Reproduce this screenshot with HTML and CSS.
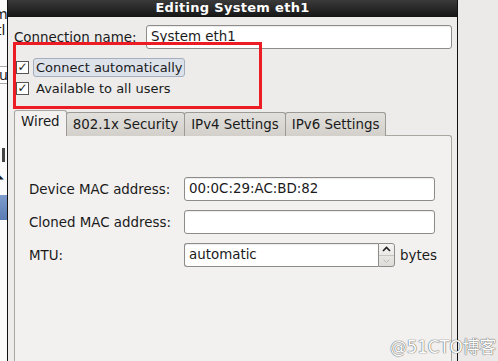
FILE: index.html
```html
<!DOCTYPE html>
<html lang="en">
<head>
    <meta charset="UTF-8">
    <title>Editing System eth1</title>
    <link rel="stylesheet" href="styles.css">
</head>
<body>
    <div class="desk">
        <div class="behind">
            <div class="frag frag-1">m</div>
            <div class="frag frag-2">tl</div>
            <div class="frag frag-box">lu</div>
            <div class="frag frag-head"></div>
            <div class="frag frag-sort">&#9698;</div>
            <div class="frag frag-sel"></div>
        </div>

        <div class="dialog">
            <div class="titlebar">Editing System eth1</div>

            <div class="dialog-body">
                <div class="name-row">
                    <label class="name-label">Connection name:</label>
                    <div class="entry name-entry">System eth1</div>
                </div>

                <div class="checks">
                    <div class="check-row">
                        <span class="checkbox">&#10003;</span>
                        <span class="check-label focused">Connect automatically</span>
                    </div>
                    <div class="check-row">
                        <span class="checkbox">&#10003;</span>
                        <span class="check-label">Available to all users</span>
                    </div>
                    <div class="annotation"></div>
                </div>

                <div class="tabs">
                    <div class="tab active">Wired</div>
                    <div class="tab">802.1x Security</div>
                    <div class="tab">IPv4 Settings</div>
                    <div class="tab">IPv6 Settings</div>
                </div>

                <div class="tab-pane">
                    <div class="form-grid">
                        <label>Device MAC address:</label>
                        <div class="entry">00:0C:29:AC:BD:82</div>

                        <label>Cloned MAC address:</label>
                        <div class="entry"></div>

                        <label>MTU:</label>
                        <div class="mtu">
                            <div class="spin">
                                <div class="entry spin-entry">automatic</div>
                                <div class="spin-buttons">
                                    <span class="spin-up">
                                        <svg width="9" height="6" viewBox="0 0 9 6"><path d="M1 5 L4.5 1.5 L8 5" fill="none" stroke="#222" stroke-width="1.6"/></svg>
                                    </span>
                                    <span class="spin-down">
                                        <svg width="9" height="6" viewBox="0 0 9 6"><path d="M1.5 1.5 L4.5 4.5 L7.5 1.5" fill="none" stroke="#bbb" stroke-width="1"/></svg>
                                    </span>
                                </div>
                            </div>
                            <span class="unit">bytes</span>
                        </div>
                    </div>
                </div>
            </div>
        </div>

        <div class="outside"></div>
    </div>

    <div class="watermark">@51CTO博客</div>
</body>
</html>
```

FILE: styles.css
```css
:root {
    --window-bg: #edecea;
    --pane-bg: #f2f1f0;
    --border: #9d9a95;
    --text: #1a1a1a;
    --mark: #ed1c24;
}

body {
    margin: 0;
    padding: 0;
    background-color: var(--window-bg);
    font-family: 'DejaVu Sans', sans-serif;
    font-size: 13.4px;
    color: var(--text);
    overflow: hidden;
}

.desk {
    display: flex;
    height: 361px;
}

/* window peeking out on the left */
.behind {
    width: 7px;
    background-color: #fafafa;
    border-right: 1px solid #111;
    position: relative;
    overflow: hidden;
}

.frag {
    position: absolute;
    left: -3px;
    font-size: 14px;
    line-height: 16px;
}

.frag-1 { top: 6px; left: -6px; }
.frag-2 { top: 22px; left: -4px; }

.frag-box {
    top: 66px;
    left: -5px;
    width: 16px;
    height: 16px;
    border-top: 1px solid #aaa;
    border-bottom: 1px solid #aaa;
    background: #fff;
}

.frag-head {
    top: 148px;
    left: 2px;
    height: 14px;
    width: 3px;
    background: #444;
}

.frag-sort {
    top: 168px;
    left: -2px;
    font-size: 9px;
    transform: rotate(90deg);
}

.frag-sel {
    top: 195px;
    left: 0;
    width: 7px;
    height: 25px;
    background: linear-gradient(#7e9ccc, #5a7cb4);
}

.dialog {
    width: 449px;
    border-right: 1px solid #111;
    display: flex;
    flex-direction: column;
}

.titlebar {
    height: 17px;
    line-height: 16px;
    background: linear-gradient(#3a3a3a, #161616);
    color: #fff;
    font-weight: bold;
    font-size: 13px;
    text-align: center;
    letter-spacing: 0.3px;
}

.dialog-body {
    flex: 1;
    padding: 8px 5px 0 6px;
    background-color: var(--window-bg);
    display: flex;
    flex-direction: column;
}

.name-row {
    display: flex;
    align-items: center;
    justify-content: space-between;
    height: 24px;
}

.name-label {
    padding-top: 1px;
}

.entry {
    height: 22px;
    line-height: 22px;
    background: #fff;
    border: 1px solid #8e8c88;
    border-radius: 3px;
    padding: 0 4px;
    box-shadow: inset 0 1px 1px rgba(0, 0, 0, 0.08);
    white-space: nowrap;
}

.name-entry {
    width: 296px;
}

.checks {
    position: relative;
    padding: 8px 0 0 2px;
    height: 54px;
}

.check-row {
    display: flex;
    align-items: center;
    height: 21px;
}

.checkbox {
    width: 11px;
    height: 11px;
    border: 1px solid #555;
    background: #fff;
    font-size: 12px;
    line-height: 11px;
    text-align: center;
    font-weight: bold;
    margin-right: 4px;
}

.check-label {
    font-size: 13px;
    padding: 1px 1px 1px 2px;
    border: 1px solid transparent;
}

.check-label.focused {
    background: #dde2ea;
    border-color: #a6afbd;
    border-radius: 3px;
}

/* red annotation frame drawn over the screenshot */
.annotation {
    position: absolute;
    left: -1px;
    top: -7px;
    width: 243px;
    height: 61px;
    border: 3px solid var(--mark);
}

.tabs {
    display: flex;
    height: 25px;
    align-items: flex-end;
    position: relative;
    z-index: 1;
}

.tab {
    height: 23px;
    line-height: 23px;
    padding: 0 6px;
    background: linear-gradient(#e2e0dc, #d3d0cb);
    border: 1px solid var(--border);
    border-bottom: none;
    border-radius: 3px 3px 0 0;
    margin-right: -1px;
}

.tab.active {
    height: 25px;
    line-height: 22px;
    padding: 0 6px;
    background: var(--pane-bg);
    border-color: #a8a59f;
}

.tab-pane {
    flex: 1;
    margin-top: -1px;
    background: var(--pane-bg);
    border: 1px solid #aaa7a1;
    border-bottom: none;
    border-radius: 0 3px 0 0;
    padding: 41px 15px 0 14px;
}

.form-grid {
    display: grid;
    grid-template-columns: 155px 251px;
    row-gap: 9px;
    align-items: center;
}

.mtu {
    display: flex;
    align-items: center;
    width: 260px;
}

.spin {
    display: flex;
}

.spin-entry {
    width: 185px;
    border-radius: 3px 0 0 3px;
    border-right: none;
}

.spin-buttons {
    width: 15px;
    height: 22px;
    border: 1px solid #8e8c88;
    border-radius: 0 3px 3px 0;
    background: linear-gradient(#f6f5f4, #dedcd8);
    display: flex;
    flex-direction: column;
}

.spin-up, .spin-down {
    flex: 1;
    display: flex;
    align-items: center;
    justify-content: center;
}

.spin-up {
    border-bottom: 1px solid #c8c6c2;
}

.unit {
    margin-left: 5px;
}

.outside {
    flex: 1;
    background-color: #ebeae8;
}

.watermark {
    position: absolute;
    left: 390px;
    top: 333px;
    font-family: 'DejaVu Sans', 'Noto Sans CJK SC', sans-serif;
    font-size: 17px;
    color: #fdfdfd;
    text-shadow: 0 0 1px #555, 0 0 1px #555;
    letter-spacing: -0.3px;
}
```
